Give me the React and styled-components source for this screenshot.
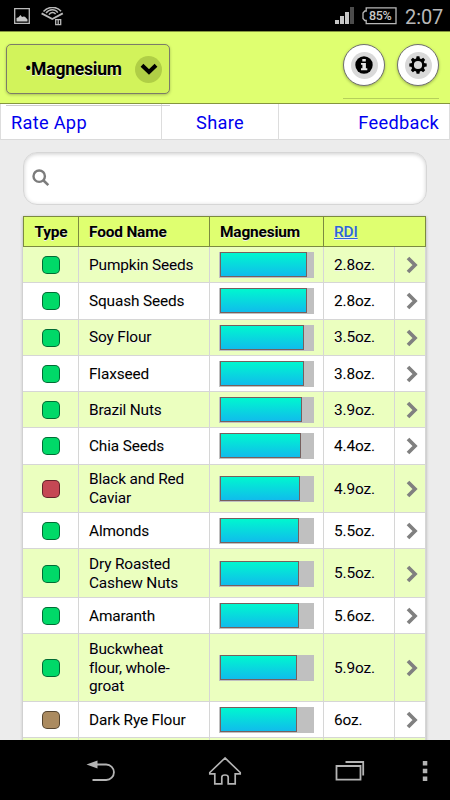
import React from 'react';
import styled, { createGlobalStyle } from 'styled-components';

const GREEN = '#00d968';
const RED = '#c54854';
const BROWN = '#ab8b60';

// row height by number of name lines
const ROW_HEIGHT = { 1: 36.25, 2: 48.7, 3: 67.3 };

const foods = [
  { name: ['Pumpkin Seeds'], type: GREEN, level: 87, rdi: '2.8oz.' },
  { name: ['Squash Seeds'], type: GREEN, level: 87, rdi: '2.8oz.' },
  { name: ['Soy Flour'], type: GREEN, level: 84, rdi: '3.5oz.' },
  { name: ['Flaxseed'], type: GREEN, level: 84, rdi: '3.8oz.' },
  { name: ['Brazil Nuts'], type: GREEN, level: 82.4, rdi: '3.9oz.' },
  { name: ['Chia Seeds'], type: GREEN, level: 81, rdi: '4.4oz.' },
  { name: ['Black and Red', 'Caviar'], type: RED, level: 80, rdi: '4.9oz.' },
  { name: ['Almonds'], type: GREEN, level: 79, rdi: '5.5oz.' },
  { name: ['Dry Roasted', 'Cashew Nuts'], type: GREEN, level: 79, rdi: '5.5oz.' },
  { name: ['Amaranth'], type: GREEN, level: 79, rdi: '5.6oz.' },
  { name: ['Buckwheat', 'flour, whole-', 'groat'], type: GREEN, level: 77.4, rdi: '5.9oz.' },
  { name: ['Dark Rye Flour'], type: BROWN, level: 77.4, rdi: '6oz.' },
  { name: [''], type: 'transparent', level: 0, rdi: '' },
];

const App = () => {
  return (
    <>
      <GlobalStyle />
      <S.Screen>
        <S.StatusBar>
          <S.StatusLeft>
            <svg width="16" height="16" viewBox="0 0 16 16">
              <path d="M.7.7h14.6v14.6H.7z" fill="none" stroke="#bbb" strokeWidth="1.3" />
              <path d="M2.5 13.5V10l2-.8L6.5 7l1.5 2 1.5-.6 1.5.4 2.500 2.6v2.1z" fill="#c8c8c8" />
            </svg>
            <svg width="23" height="19" viewBox="0 0 23 19">
              <g fill="none" stroke="#b8b8b8" strokeWidth="1.5">
                <path d="M.6 6.300l10.7 5.700 10.500-5.700" strokeWidth="1.9" />
                <path d="M2.500 4.500C7-.9 16-.9 20 4.300" />
                <path d="M5 6C8.500 1.800 14 1.900 16.800 5.600" />
                <path d="M8 7.700c1.500-2.800 5-3.100 6.600-.6" />
                <path d="M14.700 12.600h5v5h-5zM17.2 12.600v5" strokeWidth="1.3" />
              </g>
            </svg>
          </S.StatusLeft>
          <S.StatusRight>
            <svg width="20" height="18" viewBox="0 0 20 18">
              <path d="M0 13h4v4H0zM5 9h4v8H5zM10 5h4v12h-4z" fill="#c6c6c6" />
              <path d="M15 0h4v17h-4z" fill="#4c4c4c" />
            </svg>
            <S.Battery>
              <svg width="35" height="18" viewBox="0 0 35 18">
                <path d="M4.2.8H34v15.9H4.200v-3.200H2.800L1 11.500V6l1.800-2h1.400z" fill="none" stroke="#b8b8b8" strokeWidth="1.3" />
              </svg>
              <S.BatteryText>85%</S.BatteryText>
            </S.Battery>
            <S.Clock>2:07</S.Clock>
          </S.StatusRight>
        </S.StatusBar>

        <S.Header>
          <S.Select>
            <S.SelectLabel>•Magnesium</S.SelectLabel>
            <S.Disc $color="#b0ce46">
              <svg width="18" height="12" viewBox="0 0 18 12">
                <path d="M2 2.200l7 6.700 7-6.700" fill="none" stroke="#000" strokeWidth="4" />
              </svg>
            </S.Disc>
          </S.Select>
          <S.Tools>
            <S.ToolButtons>
              <S.RoundButton>
                <S.Disc $color="#d9d9d9">
                  <svg width="18" height="18" viewBox="0 0 18 18">
                    <circle cx="9" cy="9" r="8.700" />
                    <path d="M7.300 3h3.500v2.500H7.300zM6 6.900h4.900v5.400h1.400v1.900H6v-1.900h1.400V8.800H6z" fill="#e4e4e4" />
                  </svg>
                </S.Disc>
              </S.RoundButton>
              <S.RoundButton>
                <S.Disc $color="#d9d9d9">
                  <svg width="18" height="18" viewBox="0 0 18 18">
                    <circle cx="9" cy="9" r="5.400" fill="none" stroke="#000" strokeWidth="2.600" />
                    {[0, 45, 90, 135, 180, 225, 270, 315].map((a) => (
                      <path key={a} d="M7.600.3h2.800l.6 3H7z" transform={`rotate(${a} 9 9)`} />
                    ))}
                  </svg>
                </S.Disc>
              </S.RoundButton>
            </S.ToolButtons>
            <S.ToolLine />
          </S.Tools>
        </S.Header>

        <S.Links>
          <S.Link href="#none" $align="left">Rate App</S.Link>
          <S.Link href="#none" $align="center">Share</S.Link>
          <S.Link href="#none" $align="right">Feedback</S.Link>
          <S.LinksLine />
        </S.Links>

        <S.Content>
          <S.Search>
            <svg width="18" height="18" viewBox="0 0 18 18">
              <circle cx="7.200" cy="7.200" r="5.700" fill="none" stroke="#7c7c7c" strokeWidth="2.400" />
              <path d="M11.300 11.300l5 4.800" stroke="#7c7c7c" strokeWidth="2.600" />
            </svg>
          </S.Search>
          <S.Table>
            <S.HeadRow>
              <S.HeadCell $center>Type</S.HeadCell>
              <S.HeadCell>Food Name</S.HeadCell>
              <S.HeadCell>Magnesium</S.HeadCell>
              <S.HeadCell $wide><S.SortLink href="#none">RDI</S.SortLink></S.HeadCell>
            </S.HeadRow>
            {foods.map((food, i) => (
              <S.Row key={i} $odd={i % 2 === 0} $lines={food.name.length}>
                <S.Cell $center>{food.rdi && <S.Type $color={food.type} />}</S.Cell>
                <S.Cell>
                  <div>{food.name.map((line) => <div key={line}>{line}</div>)}</div>
                </S.Cell>
                <S.Cell $bar>
                  {food.rdi && <S.Track><S.Fill style={{ width: food.level }} /></S.Track>}
                </S.Cell>
                <S.Cell>{food.rdi}</S.Cell>
                <S.Cell $center $last>
                  {food.rdi && (
                    <svg width="12" height="18" viewBox="0 0 12 18">
                      <path d="M2 2l7 7-7 7" fill="none" stroke="#808080" strokeWidth="3.700" />
                    </svg>
                  )}
                </S.Cell>
              </S.Row>
            ))}
          </S.Table>
        </S.Content>

        <S.NavBar>
          <svg width="30" height="24" viewBox="0 0 30 24">
            <path d="M9 5.500h11.200a7.700 7.700 0 0 1 0 15.500H6.500" fill="none" stroke="#b4b4b4" strokeWidth="1.800" />
            <path d="M.5 5.500l11-4v8z" fill="#b4b4b4" />
          </svg>
          <svg width="34" height="30" viewBox="0 0 34 30">
            <path d="M17 2L1.800 16.500v1.300h5v10h7v-6.500q0-2.300 3.200-2.300t3.200 2.300v6.500h7v-10h5v-1.300z" fill="none" stroke="#b4b4b4" strokeWidth="1.700" />
          </svg>
          <svg width="30" height="22" viewBox="0 0 30 22">
            <path d="M1.500 6h24v13.700h-24zM10.500 2h17.700v13.500" fill="none" stroke="#b4b4b4" strokeWidth="1.800" />
          </svg>
          <svg width="6" height="22" viewBox="0 0 6 22">
            <path d="M.8 1h4.500v4.500H.8zM.8 8.800h4.500v4.500H.8zM.8 16.600h4.500v4.500H.8z" fill="#b4b4b4" />
          </svg>
        </S.NavBar>
      </S.Screen>
    </>
  );
};

const GlobalStyle = createGlobalStyle`
  * {
    box-sizing: border-box;
  }
  body {
    margin: 0;
    overflow: hidden;
    font-family: Roboto, sans-serif;
  }
  svg {
    display: block;
    flex: none;
  }
`;

const S = {
  Screen: styled.div`
    width: 450px;
    height: 800px;
    display: flex;
    flex-direction: column;
    overflow: hidden;
    background: #ececec;
  `,
  StatusBar: styled.div`
    flex: none;
    height: 31px;
    padding: 7px 7px 0 14px;
    display: flex;
    justify-content: space-between;
    background: #000;
  `,
  StatusLeft: styled.div`
    display: flex;
    gap: 11px;
    align-items: flex-start;
    svg:first-child {
      margin-top: 1px;
    }
  `,
  StatusRight: styled.div`
    display: flex;
    align-items: flex-start;
  `,
  Battery: styled.div`
    position: relative;
    margin-left: 7px;
    width: 36px;
    height: 18px;
  `,
  BatteryText: styled.span`
    position: absolute;
    left: 7px;
    top: 2px;
    font-size: 12.5px;
    line-height: 14px;
    font-weight: 500;
    letter-spacing: -0.4px;
    color: #c8c8c8;
  `,
  Clock: styled.span`
    margin-left: 7px;
    width: 38px;
    font-size: 20px;
    line-height: 20px;
    letter-spacing: -0.1px;
    color: #b8b8b8;
    white-space: nowrap;
  `,
  Header: styled.div`
    flex: none;
    height: 73px;
    padding: 12px 11px 0 6px;
    display: flex;
    justify-content: space-between;
    align-items: flex-start;
    border-top: 1px solid #85953f;
    border-bottom: 1px solid #85953f;
    background: #dfff70;
  `,
  Select: styled.div`
    width: 164px;
    height: 50px;
    padding: 0 7px 0 18px;
    display: flex;
    justify-content: space-between;
    align-items: center;
    border: 1px solid #7c7c68;
    border-radius: 5px;
    background: #d2f35b;
    box-shadow: 0 1px 3px rgba(0, 0, 0, 0.25);
  `,
  SelectLabel: styled.span`
    font-size: 17.5px;
    font-weight: bold;
    letter-spacing: -0.2px;
    text-shadow: 0 1px 0 #eee;
    white-space: nowrap;
  `,
  Disc: styled.span`
    flex: none;
    width: 27px;
    height: 27px;
    display: flex;
    justify-content: center;
    align-items: center;
    border-radius: 50%;
    background: ${(props) => props.$color};
  `,
  Tools: styled.div`
    width: 96px;
  `,
  ToolButtons: styled.div`
    display: flex;
    justify-content: space-between;
  `,
  RoundButton: styled.div`
    width: 42px;
    height: 42px;
    display: flex;
    justify-content: center;
    align-items: center;
    border: 1px solid #707070;
    border-radius: 50%;
    background: #fff;
    box-shadow: 0 1px 3px rgba(0, 0, 0, 0.3);
  `,
  ToolLine: styled.div`
    height: 1px;
    margin-top: 12px;
    background: #b5cf5b;
  `,
  Links: styled.div`
    position: relative;
    flex: none;
    height: 36px;
    display: grid;
    grid-template-columns: 161px 117px 171px;
    border-left: 1px solid #ddd;
    border-bottom: 1px solid #dadada;
    background: #fff;
  `,
  LinksLine: styled.div`
    position: absolute;
    left: 5px;
    top: 1px;
    width: 164px;
    height: 1px;
    background: #ccc;
  `,
  Link: styled.a`
    padding: 1px 10px 0;
    border-right: 1px solid #ddd;
    font-size: 18.2px;
    line-height: 35px;
    letter-spacing: 0.3px;
    text-align: ${(props) => props.$align};
    text-decoration: none;
    color: #0000ee;
  `,
  Content: styled.div`
    flex: 1;
    min-height: 0;
    overflow: hidden;
    padding: 12px 23px 0;
  `,
  Search: styled.div`
    width: 404px;
    height: 53px;
    padding: 0 8px 2px;
    display: flex;
    align-items: center;
    border: 1px solid #d6d6d6;
    border-radius: 14px;
    background: #fff;
    box-shadow: inset 0 1px 4px rgba(0, 0, 0, 0.2);
  `,
  Table: styled.div`
    width: 403px;
    margin-top: 11px;
    box-shadow: 0 1px 3px rgba(0, 0, 0, 0.3);
    font-size: 15.4px;
    letter-spacing: -0.15px;
    line-height: 18.6px;
    color: #000;
    text-shadow: 0 1px 0 #eee;
  `,
  HeadRow: styled.div`
    height: 31px;
    display: grid;
    grid-template-columns: 55px 131px 114px 1fr;
    border: 1px solid #7b8a40;
    background: #dfff70;
  `,
  HeadCell: styled.div`
    display: flex;
    align-items: center;
    justify-content: ${(props) => (props.$center ? 'center' : 'flex-start')};
    padding-top: 2px;
    padding-left: ${(props) => (props.$center ? 0 : '10px')};
    border-right: ${(props) => (props.$wide ? 0 : '1px solid #7b8a40')};
    font-weight: bold;
  `,
  SortLink: styled.a`
    color: #2c66d3;
    font-weight: 500;
  `,
  Row: styled.div`
    height: ${(props) => ROW_HEIGHT[props.$lines]}px;
    display: grid;
    grid-template-columns: 56px 131px 114px 71px 31px;
    border-bottom: 1px solid #d6d6d6;
    background: ${(props) => (props.$odd ? '#ebffbf' : '#fff')};
  `,
  Cell: styled.div`
    display: flex;
    align-items: center;
    justify-content: ${(props) => (props.$center ? 'center' : 'flex-start')};
    padding-left: ${(props) => (props.$last ? '3px' : props.$center ? '1px' : props.$bar ? '9px' : '10px')};
    padding-top: 1px;
    border-right: 1px solid #d6d6d6;
    white-space: nowrap;
  `,
  Type: styled.span`
    width: 18px;
    height: 18px;
    border: 1px solid rgba(0, 0, 0, 0.5);
    border-radius: 5px;
    background: ${(props) => props.$color};
  `,
  Track: styled.div`
    width: 95px;
    height: 26px;
    padding-left: 1px;
    background: #c0c0c0;
  `,
  Fill: styled.div`
    height: 25px;
    border: 1px solid #76605e;
    background: linear-gradient(#00f7cf, #10bcec);
  `,
  NavBar: styled.div`
    flex: none;
    height: 60px;
    padding: 2px 21px 0 86px;
    display: grid;
    grid-template-columns: 122px 127px 87px 1fr;
    align-items: center;
    background: #000;
  `,
};

export default App;
